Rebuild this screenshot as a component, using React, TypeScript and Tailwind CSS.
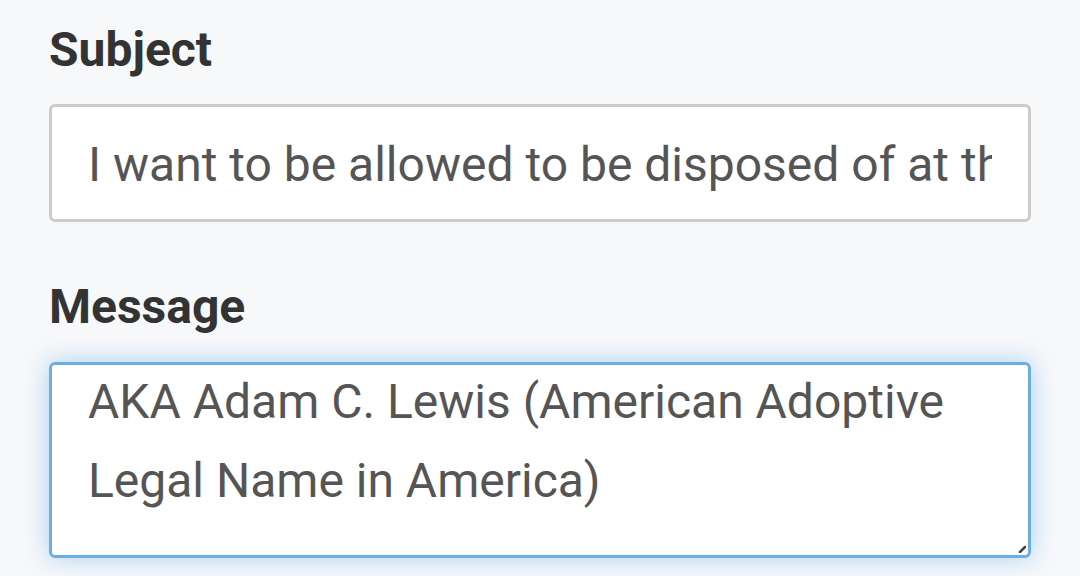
import React from "react";

export default function App() {
  const font = { fontFamily: "Roboto, 'Noto Sans', sans-serif" };
  return (
    <div className="w-[1080px] h-[576px] overflow-hidden bg-[#f7f8fa]" style={font}>
      <div className="flex flex-col pl-[49px] pr-[49px] pt-[22px]">
        <div className="text-[48px] leading-[56px] font-bold text-[#333333]">Subject</div>
        <div className="mt-[26px] h-[118px] rounded-[6px] border-[3px] border-[#cccccc] bg-white pl-[36px] pr-[36px] flex items-center pt-[3px]">
          <div className="overflow-hidden whitespace-nowrap w-full text-[48px] leading-[78px] text-[#555555]">
            I want to be allowed to be disposed of at the Vatican
          </div>
        </div>
        <div className="mt-[57px] text-[48px] leading-[56px] font-bold text-[#333333]">Message</div>
        <div className="relative mt-[27px] h-[196px] rounded-[6px] border-[3px] border-[#6aaee3] bg-white shadow-[0_0_24px_rgba(102,175,233,0.55)] overflow-hidden pl-[36px] pr-[36px]">
          <div className="text-[48px] leading-[79px] text-[#555555] mt-[-3px]">
            <div>AKA Adam C. Lewis (American Adoptive</div>
            <div>Legal Name in America)</div>
          </div>
          <svg className="absolute right-[2px] bottom-[2px]" width="8" height="8" viewBox="0 0 8 8">
            <path d="M7 2 L2 7" stroke="#444" strokeWidth="2.5" strokeLinecap="round" />
          </svg>
        </div>
      </div>
    </div>
  );
}
